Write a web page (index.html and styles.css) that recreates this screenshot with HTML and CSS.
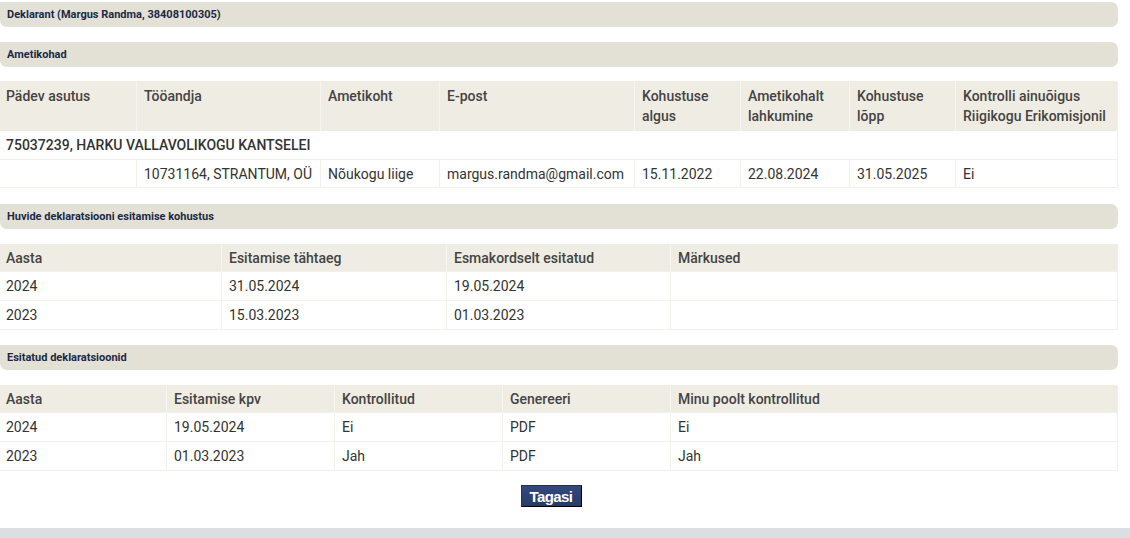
FILE: index.html
```html
<!DOCTYPE html>
<html lang="et">
<head>
  <meta charset="UTF-8" />
  <title>Deklarant</title>
  <link rel="stylesheet" href="styles.css">
</head>
<body>
  <div class="page">

    <div class="bar">Deklarant (Margus Randma, 38408100305)</div>

    <div class="bar">Ametikohad</div>
    <table class="grid jobs">
      <tr>
        <th class="c1">Pädev asutus</th>
        <th class="c2">Tööandja</th>
        <th class="c3">Ametikoht</th>
        <th class="c4">E-post</th>
        <th class="c5">Kohustuse algus</th>
        <th class="c6">Ametikohalt lahkumine</th>
        <th class="c7">Kohustuse lõpp</th>
        <th>Kontrolli ainuõigus Riigikogu Erikomisjonil</th>
      </tr>
      <tr class="group">
        <td colspan="8">75037239, HARKU VALLAVOLIKOGU KANTSELEI</td>
      </tr>
      <tr>
        <td></td>
        <td>10731164, STRANTUM, OÜ</td>
        <td>Nõukogu liige</td>
        <td>margus.randma@gmail.com</td>
        <td>15.11.2022</td>
        <td>22.08.2024</td>
        <td>31.05.2025</td>
        <td>Ei</td>
      </tr>
    </table>

    <div class="bar">Huvide deklaratsiooni esitamise kohustus</div>
    <table class="grid duty">
      <tr>
        <th>Aasta</th>
        <th>Esitamise tähtaeg</th>
        <th>Esmakordselt esitatud</th>
        <th>Märkused</th>
      </tr>
      <tr><td>2024</td><td>31.05.2024</td><td>19.05.2024</td><td></td></tr>
      <tr><td>2023</td><td>15.03.2023</td><td>01.03.2023</td><td></td></tr>
    </table>

    <div class="bar">Esitatud deklaratsioonid</div>
    <table class="grid filed">
      <tr>
        <th>Aasta</th>
        <th>Esitamise kpv</th>
        <th>Kontrollitud</th>
        <th>Genereeri</th>
        <th>Minu poolt kontrollitud</th>
      </tr>
      <tr><td>2024</td><td>19.05.2024</td><td>Ei</td><td>PDF</td><td>Ei</td></tr>
      <tr><td>2023</td><td>01.03.2023</td><td>Jah</td><td>PDF</td><td>Jah</td></tr>
    </table>

    <div class="actions">
      <button class="btn">Tagasi</button>
    </div>
  </div>
  <div class="footer"></div>
</body>
</html>
```

FILE: styles.css
```css
body {
  margin: 0;
  font-family: Roboto, 'Liberation Sans', sans-serif;
  font-size: 14px;
  color: #333;
  background: #fff;
}
.page {
  width: 1118px;
  padding-top: 2px;
}
.bar {
  background: #e3e0d5;
  border-radius: 0 7px 7px 7px;
  height: 25px;
  line-height: 25px;
  padding-left: 7px;
  font-size: 11px;
  font-weight: bold;
  color: #1b2a47;
  margin-bottom: 15px;
}
.grid {
  width: 100%;
  table-layout: fixed;
  border-collapse: collapse;
  margin-bottom: 15px;
  border-right: 1px solid #f2f0ea;
  border-bottom: 1px solid #f2f0ea;
}
.grid th {
  background: #efece3;
  font-weight: 500;
  color: #444;
  text-align: left;
  vertical-align: top;
  padding: 5px 7px 4px 7px;
  line-height: 20px;
  border-left: 1px solid #f7f5f0;
}
.grid td {
  padding: 0 7px;
  height: 28px;
  border-top: 1px solid #f2f0ea;
  border-left: 1px solid #f2f0ea;
}
.grid th:first-child,
.grid td:first-child {
  border-left: none;
  padding-left: 6px;
}
.jobs {
  margin-top: -1px;
  margin-bottom: 16px;
}
.jobs th { padding-bottom: 5px; }
.jobs td { height: 27px; }
.jobs .c1 { width: 123px; }
.jobs .c2 { width: 169px; }
.jobs .c3 { width: 104px; }
.jobs .c4 { width: 180px; }
.jobs .c5 { width: 91px; }
.jobs .c6 { width: 94px; }
.jobs .c7 { width: 91px; }
.jobs .group td {
  font-weight: 500;
  color: #333;
  border-top: none;
  height: 28px;
}
.duty th,
.filed th {
  padding-top: 5px;
  padding-bottom: 4px;
  line-height: 18px;
}
.duty th:nth-child(1) { width: 208px; }
.duty th:nth-child(2) { width: 210px; }
.duty th:nth-child(3) { width: 209px; }
.filed { margin-bottom: 14px; }
.filed th:nth-child(1) { width: 153px; }
.filed th:nth-child(2) { width: 153px; }
.filed th:nth-child(3) { width: 153px; }
.filed th:nth-child(4) { width: 153px; }
.actions {
  display: flex;
  justify-content: center;
  padding: 0 16px 21px 0;
}
.btn {
  background: linear-gradient(#34497b, #273b67);
  color: #fff;
  font-family: 'Liberation Sans', sans-serif;
  font-weight: bold;
  font-size: 15px;
  letter-spacing: -0.6px;
  border: 1px solid #22335a;
  border-right-color: #000;
  border-bottom-color: #000;
  width: 61px;
  height: 22px;
  padding: 0;
}
.footer {
  background: #dcdfe2;
  height: 12px;
}
```
